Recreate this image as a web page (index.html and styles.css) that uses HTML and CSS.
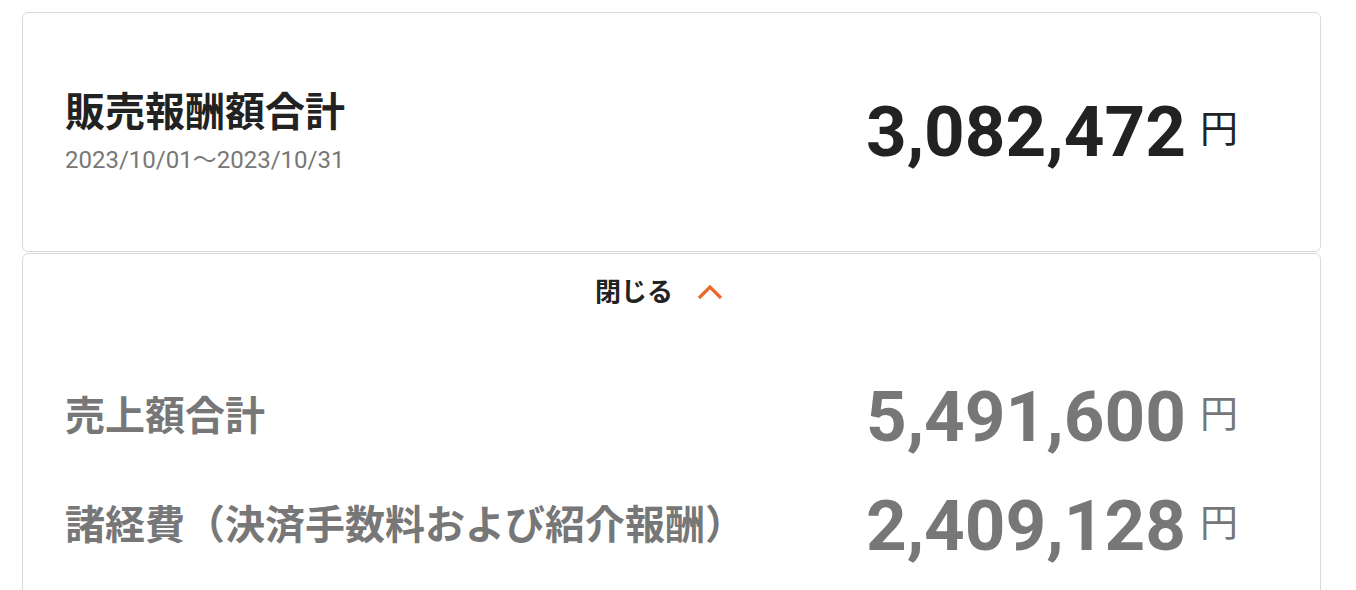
FILE: index.html
```html
<!doctype html>
<html lang="ja">
  <head>
    <meta charset="utf-8">
    <title>販売報酬額合計</title>
    <link rel="stylesheet" href="styles.css">
  </head>
  <body>
    <div class="wrap">
      <div class="card summary">
        <div class="summary-head">
          <h1 class="summary-title">販売報酬額合計</h1>
          <div class="summary-period">2023/10/01〜2023/10/31</div>
        </div>
        <div class="amount">
          <span class="amount-value">3,082,472</span>
          <span class="amount-unit">円</span>
        </div>
      </div>
      <div class="card detail">
        <button class="toggle" type="button">
          <span class="toggle-label">閉じる</span>
          <svg class="toggle-icon" width="26" height="16" viewBox="0 0 26 16">
            <path d="M2 14 L13 3 L24 14" fill="none" stroke="#e8692b" stroke-width="3.2"/>
          </svg>
        </button>
        <div class="rows">
          <div class="row">
            <div class="row-label">売上額合計</div>
            <div class="amount muted">
              <span class="amount-value">5,491,600</span>
              <span class="amount-unit">円</span>
            </div>
          </div>
          <div class="row">
            <div class="row-label">諸経費（決済手数料および紹介報酬）</div>
            <div class="amount muted">
              <span class="amount-value">2,409,128</span>
              <span class="amount-unit">円</span>
            </div>
          </div>
        </div>
      </div>
    </div>
  </body>
</html>
```

FILE: styles.css
```css
body {
  margin: 0;
  background: white;
  color: #222;
  font-family: Roboto, "Noto Sans CJK JP", sans-serif;
  overflow: hidden;
}

.wrap {
  width: 1299px;
  padding: 12px 0 0 22px;
}

.card {
  border: 1px solid #dadada;
  border-radius: 6px;
  background: white;
}

.summary {
  height: 238px;
  display: flex;
  align-items: center;
  justify-content: space-between;
  padding: 0 82px 0 42px;
}

.summary-title {
  margin: 0;
  font-size: 40px;
  line-height: 48px;
  font-weight: bold;
}

.summary-period {
  margin-top: 8px;
  font-size: 24px;
  line-height: 30px;
  color: #777;
}

.amount {
  display: flex;
  align-items: center;
}

.amount-value {
  font-size: 71px;
  line-height: 72px;
  font-weight: bold;
}

.amount-unit {
  margin-left: 14px;
  margin-top: -6px;
  font-size: 38px;
  line-height: 40px;
}

.muted {
  color: #777;
}

.detail {
  margin-top: 1px;
  height: 360px;
  padding-top: 20px;
}

.toggle {
  display: flex;
  align-items: center;
  margin: 0 auto;
  padding: 0;
  border: 0;
  background: none;
  font: bold 26px/36px Roboto, "Noto Sans CJK JP", sans-serif;
  color: #222;
  cursor: pointer;
}

.toggle-icon {
  margin: 0 25px 0 24px;
}

.rows {
  margin-top: 52px;
  padding: 0 82px 0 42px;
}

.row {
  height: 109px;
  display: flex;
  align-items: center;
  justify-content: space-between;
}

.row-label {
  font-size: 40px;
  line-height: 48px;
  font-weight: bold;
  color: #777;
}
```
